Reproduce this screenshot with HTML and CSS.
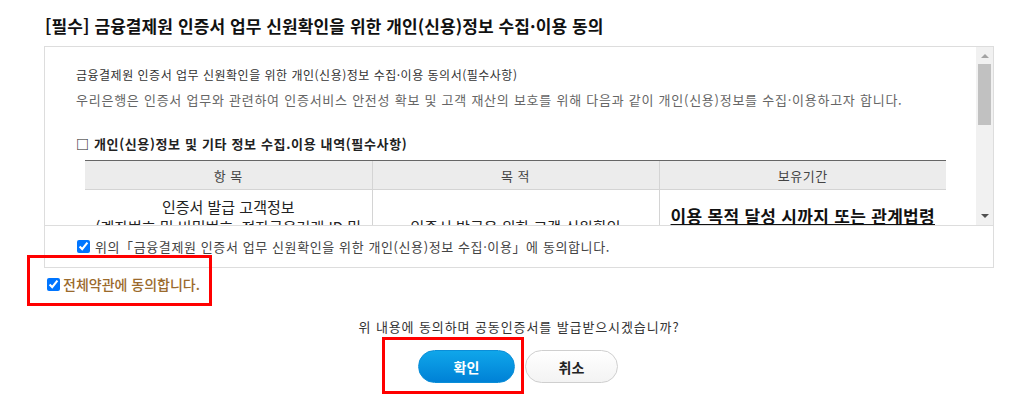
FILE: index.html
```html
<!DOCTYPE html>
<html lang="ko">
<head>
  <meta charset="UTF-8">
  <meta name="viewport" content="width=device-width, initial-scale=1.0">
  <title>개인(신용)정보 수집·이용 동의</title>
  <link rel="stylesheet" href="styles.css">
</head>
<body>

  <div class="page">
    <!-- 약관 제목 -->
    <h2 class="terms-title">[필수] 금융결제원 인증서 업무 신원확인을 위한 개인(신용)정보 수집·이용 동의</h2>

    <!-- 약관 박스 -->
    <div class="terms-box">
      <div class="terms-view">
        <div class="terms-content">
          <p class="terms-head">금융결제원 인증서 업무 신원확인을 위한 개인(신용)정보 수집·이용 동의서(필수사항)</p>
          <p class="terms-desc">우리은행은 인증서 업무와 관련하여 인증서비스 안전성 확보 및 고객 재산의 보호를 위해 다음과 같이 개인(신용)정보를 수집·이용하고자 합니다.</p>

          <h3 class="terms-sub">□ 개인(신용)정보 및 기타 정보 수집.이용 내역(필수사항)</h3>

          <table class="terms-table">
            <thead>
              <tr>
                <th>항 목</th>
                <th>목 적</th>
                <th>보유기간</th>
              </tr>
            </thead>
            <tbody>
              <tr>
                <td>인증서 발급 고객정보<br>(계좌번호 및 비밀번호, 전자금융거래 ID 및<br>비밀번호 등)</td>
                <td>인증서 발급을 위한 고객 신원확인</td>
                <td><strong class="keep">이용 목적 달성 시까지 또는 관계법령<br>에 따른 보유기간까지</strong></td>
              </tr>
            </tbody>
          </table>
        </div>

        <!-- 스크롤바 -->
        <div class="scrollbar">
          <span class="arrow arrow-up"></span>
          <span class="thumb"></span>
          <span class="arrow arrow-down"></span>
        </div>
      </div>

      <label class="terms-check">
        <input type="checkbox" checked>
        <span>위의「금융결제원 인증서 업무 신원확인을 위한 개인(신용)정보 수집·이용」에 동의합니다.</span>
      </label>
    </div>

    <!-- 전체 동의 -->
    <div class="agree-mark">
      <label class="agree-all">
        <input type="checkbox" checked>
        <span>전체약관에 동의합니다.</span>
      </label>
    </div>

    <p class="question">위 내용에 동의하며 공동인증서를 발급받으시겠습니까?</p>

    <div class="btn-area">
      <div class="btn-mark">
        <button class="btn btn-ok">확인</button>
      </div>
      <button class="btn btn-cancel">취소</button>
    </div>
  </div>

</body>
</html>
```

FILE: styles.css
```css
/* ===== General ===== */
body {
  margin: 0;
  padding: 0;
  background-color: #fff;
  font-family: "Noto Sans CJK KR", "Noto Sans", sans-serif;
  color: #333;
}

.page {
  width: 950px;
  padding: 15px 0 0 44px;
}

/* ===== Title ===== */
.terms-title {
  margin: 0 0 9px 1px;
  font-size: 17px;
  line-height: 22px;
  font-weight: 700;
  letter-spacing: 0.1px;
  color: #111;
}

/* ===== Terms Box ===== */
.terms-box {
  border: 1px solid #ddd;
}

.terms-view {
  display: flex;
  height: 178px;
  border-bottom: 1px solid #ddd;
}

.terms-content {
  flex: 1;
  overflow: hidden;
  padding: 19px 0 0 31px;
}

.terms-head {
  margin: 0;
  font-size: 12px;
  line-height: 18px;
  letter-spacing: 0.5px;
  color: #333;
}

.terms-desc {
  margin: 7px 0 0;
  font-size: 13px;
  line-height: 18px;
  letter-spacing: 0.75px;
  color: #666;
}

.terms-sub {
  margin: 26px 0 0;
  font-size: 13px;
  line-height: 18px;
  font-weight: 700;
  letter-spacing: 0.65px;
  color: #222;
}

.terms-table {
  margin: 7px 0 0 9px;
  width: 861px;
  border-collapse: collapse;
  table-layout: fixed;
}

.terms-table th {
  height: 28px;
  padding: 0;
  background-color: #ececec;
  border-top: 1px solid #666;
  border-bottom: 1px solid #d4d4d4;
  border-left: 1px solid #d4d4d4;
  font-size: 13px;
  font-weight: 400;
  letter-spacing: 0.5px;
  color: #444;
}

.terms-table td {
  padding: 7px 10px;
  border-left: 1px solid #d4d4d4;
  border-bottom: 1px solid #d4d4d4;
  text-align: center;
  vertical-align: middle;
  font-size: 15px;
  line-height: 20px;
  color: #222;
}

.terms-table th:first-child,
.terms-table td:first-child {
  border-left: none;
}

.keep {
  font-size: 17px;
  line-height: 22px;
  letter-spacing: 0.3px;
  text-decoration: underline;
  color: #111;
}

/* ===== Scrollbar ===== */
.scrollbar {
  width: 17px;
  display: flex;
  flex-direction: column;
  align-items: center;
  background-color: #f1f1f1;
}

.arrow {
  width: 0;
  height: 0;
  border-left: 4px solid transparent;
  border-right: 4px solid transparent;
}

.arrow-up {
  margin-top: 7px;
  border-bottom: 4px solid #a3a3a3;
}

.thumb {
  width: 13px;
  height: 61px;
  margin-top: 6px;
  background-color: #c1c1c1;
}

.arrow-down {
  margin-top: auto;
  margin-bottom: 7px;
  border-top: 4px solid #505050;
}

/* ===== Checkbox rows ===== */
.terms-check {
  display: flex;
  align-items: center;
  gap: 5px;
  height: 41px;
  padding-left: 32px;
  font-size: 13px;
  letter-spacing: 0.6px;
  color: #444;
}

.terms-check input,
.agree-all input {
  width: 13px;
  height: 13px;
  margin: 0;
}

/* 강조 표시 (빨간 박스) */
.agree-mark {
  width: 185px;
  height: 51px;
  margin: -13px 0 0 -17px;
  padding: 16px 0 10px 17px;
  border: 3px solid #f00;
  box-sizing: border-box;
}

.agree-all {
  display: flex;
  align-items: center;
  gap: 3px;
  height: 20px;
  font-size: 14px;
  font-weight: 500;
  color: #9b6a2c;
}

.question {
  margin: 12px 0 0;
  text-align: center;
  font-size: 13px;
  line-height: 18px;
  letter-spacing: 0.9px;
  color: #333;
}

/* ===== Buttons ===== */
.btn-area {
  display: flex;
  justify-content: center;
  align-items: flex-start;
  margin-top: 1px;
  padding-right: 38px;
}

.btn-mark {
  margin-right: 1px;
  padding: 10px 6px 8px 33px;
  border: 3px solid #f00;
}

.btn {
  height: 33px;
  border-radius: 17px;
  font-family: inherit;
  font-size: 14px;
  font-weight: 700;
  cursor: pointer;
}

.btn-ok {
  width: 97px;
  display: block;
  border: 1px solid #0b8ed8;
  background: linear-gradient(#0fa6ea, #0081d6);
  color: #fff;
}

.btn-cancel {
  width: 93px;
  margin-top: 13px;
  border: 1px solid #cfcfcf;
  background: linear-gradient(#fff, #f3f3f3);
  color: #222;
}
```
